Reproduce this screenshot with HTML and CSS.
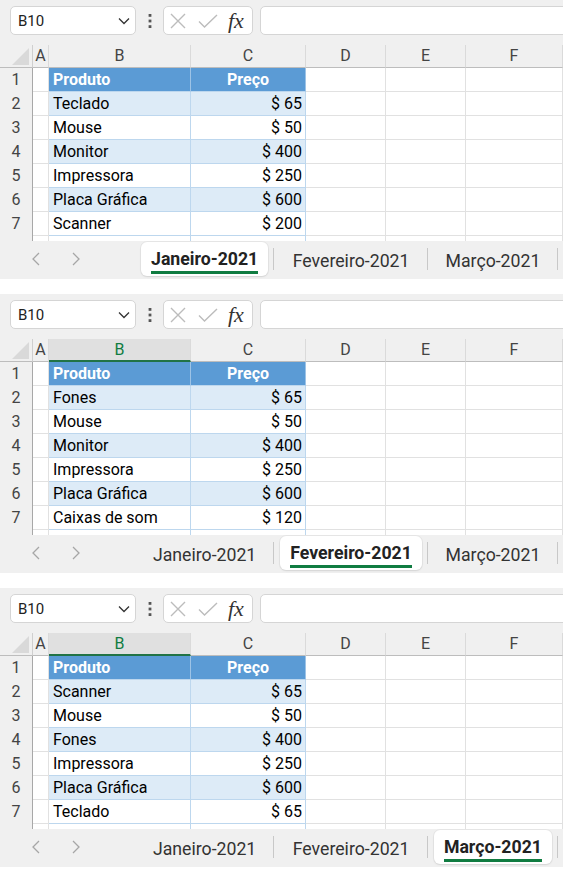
FILE: index.html
```html
<!DOCTYPE html>
<html lang="pt">
<head>
  <meta charset="UTF-8" />
  <meta name="viewport" content="width=device-width, initial-scale=1" />
  <title>Produtos por mês</title>
  <link rel="stylesheet" href="styles.css">
</head>
<body>
  <div id="books"></div>
  <script>
    document.addEventListener('DOMContentLoaded', () => {
      const books = document.getElementById('books');
      const tabNames = ['Janeiro-2021', 'Fevereiro-2021', 'Março-2021'];
      const columns = ['A', 'B', 'C', 'D', 'E', 'F'];
      const sheets = [
        { active: 0, selectCol: false, rows: [['Teclado', '$ 65'], ['Mouse', '$ 50'], ['Monitor', '$ 400'], ['Impressora', '$ 250'], ['Placa Gráfica', '$ 600'], ['Scanner', '$ 200']] },
        { active: 1, selectCol: true, rows: [['Fones', '$ 65'], ['Mouse', '$ 50'], ['Monitor', '$ 400'], ['Impressora', '$ 250'], ['Placa Gráfica', '$ 600'], ['Caixas de som', '$ 120']] },
        { active: 2, selectCol: true, rows: [['Scanner', '$ 65'], ['Mouse', '$ 50'], ['Fones', '$ 400'], ['Impressora', '$ 250'], ['Placa Gráfica', '$ 600'], ['Teclado', '$ 65']] }
      ];

      function renderToolbar() {
        return `
          <div class="toolbar">
            <div class="name-box">
              <span>B10</span>
              <svg width="12" height="8" viewBox="0 0 12 8"><path d="M1 1.5l5 5 5-5" fill="none" stroke="#333" stroke-width="1.3"/></svg>
            </div>
            <div class="dots">
              <svg width="4" height="16" viewBox="0 0 4 16"><rect x="0.6" y="1" width="2.8" height="2.8" fill="#555"/><rect x="0.6" y="6.6" width="2.8" height="2.8" fill="#555"/><rect x="0.6" y="12.2" width="2.8" height="2.8" fill="#555"/></svg>
            </div>
            <div class="fx-box">
              <svg class="icon-x" width="16" height="16" viewBox="0 0 16 16"><path d="M1 1L15 15M15 1L1 15" fill="none" stroke="#bcbcbc" stroke-width="1.4"/></svg>
              <svg class="icon-ok" width="20" height="14" viewBox="0 0 20 14"><path d="M1 7.5l5.5 5.5L19 1" fill="none" stroke="#bcbcbc" stroke-width="1.4"/></svg>
              <span class="fx">fx</span>
            </div>
            <div class="formula"></div>
          </div>`;
      }

      function renderGrid(sheet) {
        let html = `<div class="corner"><svg width="18" height="17" viewBox="0 0 18 17"><polygon points="17,0 17,17 0,17" fill="#d9d9d9"/></svg></div>`;
        columns.forEach(col => {
          const selected = sheet.selectCol && col === 'B' ? ' selected' : '';
          html += `<div class="col-head${selected}">${col}</div>`;
        });

        html += `<div class="row-head">1</div><div class="cell"></div>`;
        html += `<div class="cell tbl head">Produto</div><div class="cell tbl head center">Preço</div>`;
        html += `<div class="cell"></div><div class="cell"></div><div class="cell"></div>`;

        sheet.rows.forEach((row, i) => {
          const band = i % 2 === 0 ? ' band' : '';
          html += `
            <div class="row-head">${i + 2}</div>
            <div class="cell"></div>
            <div class="cell tbl${band}">${row[0]}</div>
            <div class="cell tbl num${band}">${row[1]}</div>
            <div class="cell"></div><div class="cell"></div><div class="cell"></div>`;
        });

        // row 8 is cut off by the sheet tabs
        html += `<div class="row-head"></div>`;
        html += `<div class="cell cut"></div><div class="cell cut tbl"></div><div class="cell cut tbl"></div>`;
        html += `<div class="cell cut"></div><div class="cell cut"></div><div class="cell cut"></div>`;
        return `<div class="sheet">${html}</div>`;
      }

      function renderTabs(active) {
        const tabs = tabNames.map((name, i) => `
          <div class="tab${i === active ? ' active' : ''}">
            <div class="tab-inner"><span class="tab-label" data-text="${name}">${name}</span></div>
          </div>`).join('');
        return `
          <div class="tabbar">
            <div class="nav">
              <svg width="8" height="14" viewBox="0 0 8 14"><path d="M7 1L1 7l6 6" fill="none" stroke="#a6a6a6" stroke-width="1.3"/></svg>
              <svg width="8" height="14" viewBox="0 0 8 14"><path d="M1 1l6 6-6 6" fill="none" stroke="#a6a6a6" stroke-width="1.3"/></svg>
            </div>
            ${tabs}
          </div>`;
      }

      sheets.forEach(sheet => {
        const book = document.createElement('section');
        book.className = 'book';
        book.innerHTML = renderToolbar() + renderGrid(sheet) + renderTabs(sheet.active);
        books.appendChild(book);
      });
    });
  </script>
</body>
</html>
```

FILE: styles.css
```css
* {
  box-sizing: border-box;
}
body {
  margin: 0;
  width: 563px;
  overflow: hidden;
  font-family: Roboto, 'Noto Sans', sans-serif;
  background-color: #fff;
  color: #000;
}
.book {
  background-color: #f0f0f0;
}
.book + .book {
  margin-top: 15px;
}

/* formula bar */
.toolbar {
  display: flex;
  align-items: flex-start;
  height: 45px;
  padding: 6px 0 0 10px;
}
.name-box, .fx-box, .formula {
  height: 29px;
  background-color: #fff;
  border: 1px solid #d5d5d5;
  border-radius: 5px;
}
.name-box {
  width: 126px;
  display: flex;
  align-items: center;
  justify-content: space-between;
  padding: 0 5px 0 7px;
  font-size: 15px;
  color: #222;
}
.dots {
  width: 27px;
  height: 29px;
  display: flex;
  align-items: center;
  justify-content: center;
}
.fx-box {
  width: 90px;
  display: flex;
  align-items: center;
  padding-left: 6px;
}
.icon-ok {
  margin-left: 12px;
}
.fx {
  margin-left: 10px;
  font-family: 'Liberation Serif', 'DejaVu Serif', serif;
  font-style: italic;
  font-size: 22px;
  color: #333;
}
.formula {
  flex: 1;
  margin: 0 -8px 0 7px;
}

/* grid */
.sheet {
  display: grid;
  grid-template-columns: 33px 16px 142px 115px 80px 80px 1fr;
  grid-template-rows: 23px repeat(7, 24px) 5px;
  background-color: #fff;
}
.corner {
  display: flex;
  align-items: flex-end;
  justify-content: flex-end;
  padding: 0 2px 2px 0;
  background-color: #f0f0f0;
  border-right: 1px solid #cfcfcf;
  border-bottom: 1px solid #bdbdbd;
}
.col-head {
  background-color: #f0f0f0;
  border-right: 1px solid #dadada;
  border-bottom: 1px solid #bdbdbd;
  text-align: center;
  font-size: 16px;
  line-height: 22px;
  color: #444;
}
.col-head.selected {
  background-color: #e0e0e0;
  color: #107c41;
  border-bottom: 2px solid #217346;
}
.row-head {
  background-color: #f0f0f0;
  border-right: 1px solid #a8a8a8;
  text-align: center;
  font-size: 16px;
  line-height: 24px;
  color: #444;
}
.cell {
  padding: 0 4px;
  border-right: 1px solid #e1e1e1;
  border-bottom: 1px solid #e1e1e1;
  font-size: 16px;
  line-height: 23px;
  white-space: nowrap;
  overflow: hidden;
}
.cell.tbl {
  border-right-color: #bdd7ee;
  border-bottom-color: #bdd7ee;
}
.cell.head {
  background-color: #5b9bd5;
  color: #fff;
  font-weight: 700;
  border-right-color: #9dc3e6;
}
.cell.band {
  background-color: #ddebf7;
}
.cell.num {
  text-align: right;
  padding-right: 3px;
}
.cell.center {
  text-align: center;
}
.cell.cut {
  border-bottom: 0;
}

/* sheet tabs */
.tabbar {
  display: flex;
  align-items: flex-start;
  height: 38px;
  background-color: #f0f0f0;
}
.nav {
  width: 135px;
  height: 36px;
  display: flex;
  align-items: center;
  gap: 32px;
  padding-left: 32px;
}
.tab {
  display: flex;
  align-items: center;
  height: 36px;
}
.tab::after {
  content: '';
  width: 1px;
  height: 22px;
  background-color: #c8c8c8;
}
.tab-inner {
  height: 34px;
  margin: 0 5px 0 6px;
  padding: 4px 10px 0;
  display: flex;
  flex-direction: column;
  align-items: center;
  justify-content: center;
  border-radius: 6px;
}
.tab.active .tab-inner {
  background-color: #fff;
  box-shadow: 0 0 0 1px rgba(0, 0, 0, 0.04), 0 1px 2px rgba(0, 0, 0, 0.08);
}
.tab-label {
  display: inline-flex;
  flex-direction: column;
  align-items: center;
  font-size: 17.7px;
  line-height: 20px;
  color: #333;
  white-space: nowrap;
}
.tab-label::after {
  content: attr(data-text);
  font-weight: 700;
  height: 0;
  visibility: hidden;
  overflow: hidden;
}
.tab.active .tab-label {
  font-weight: 700;
  color: #222;
  padding-bottom: 2px;
  border-bottom: 3px solid #107c41;
}
```
